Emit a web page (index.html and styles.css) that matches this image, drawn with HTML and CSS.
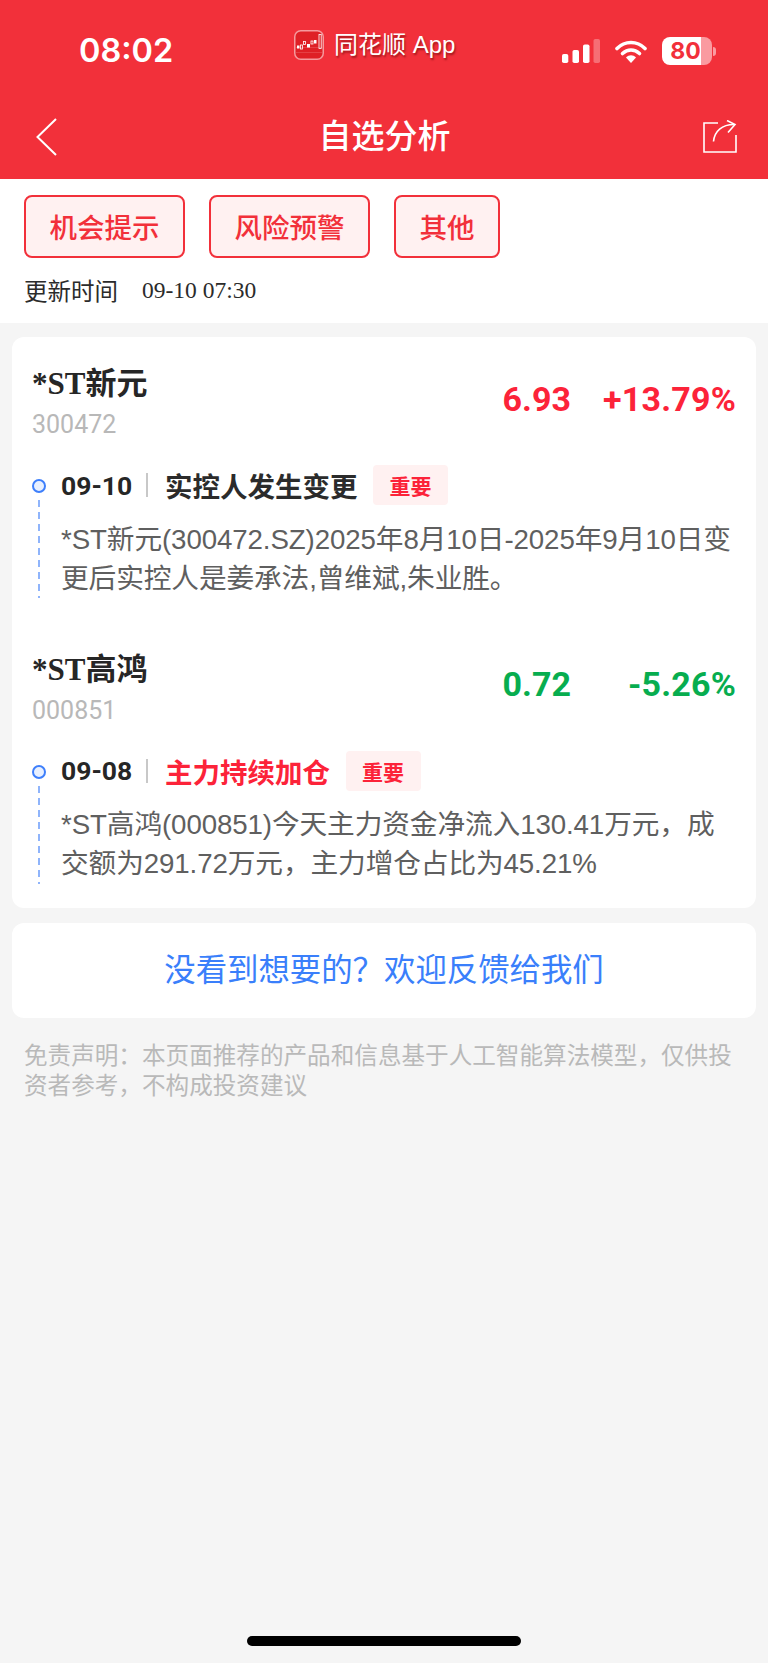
FILE: index.html
```html
<!DOCTYPE html>
<html lang="zh">
<head>
<meta charset="utf-8">
<title>自选分析</title>
<link rel="stylesheet" href="styles.css">
</head>
<body>
<div class="page">
  <header class="header">
    <div class="status">
      <span class="clock">08:02</span>
      <div class="app-label">
        <svg class="app-logo" viewBox="0 0 30 30">
          <rect x="0.75" y="0.75" width="28.5" height="28.5" rx="6" fill="#df2026" stroke="#f59a9d" stroke-width="1.5"/>
          <path d="M2 17.500h26M2 22.500h26" stroke="#e9565a" stroke-width="0.6"/>
          <g fill="#fff">
            <rect x="3" y="15.500" width="2.500" height="3"/><rect x="13" y="14" width="3" height="3.500"/>
            <rect x="20" y="10" width="2.500" height="3.500"/>
          </g>
          <g fill="none" stroke="#fff" stroke-width="0.8">
            <rect x="6.500" y="15" width="2" height="4"/><rect x="9.500" y="11.500" width="2" height="3"/>
            <rect x="17" y="11" width="2" height="3"/><rect x="25" y="4.500" width="2.200" height="14"/>
          </g>
        </svg>
        <span class="app-name">同花顺 App</span>
      </div>
      <div class="status-icons">
        <svg class="signal" viewBox="0 0 38 24">
          <rect x="0" y="15" width="6.300" height="9" rx="1.800" fill="#fff"/>
          <rect x="10.500" y="11" width="6.500" height="13" rx="1.800" fill="#fff"/>
          <rect x="21" y="5.500" width="6.500" height="18.500" rx="1.800" fill="#fff"/>
          <rect x="31.500" y="0" width="6.500" height="24" rx="1.800" fill="#fff" fill-opacity="0.3"/>
        </svg>
        <svg class="wifi" viewBox="0 0 32 24">
          <path d="M2 9.500C10 1.500 22 1.500 30 9.500" fill="none" stroke="#fff" stroke-width="3.600" stroke-linecap="round"/>
          <path d="M7.500 14.500C12.500 9.800 19.500 9.800 24.500 14.500" fill="none" stroke="#fff" stroke-width="3.600" stroke-linecap="round"/>
          <path d="M11 18.500C14 15.500 18 15.500 21 18.500L16 24Z" fill="#fff"/>
        </svg>
        <div class="battery">
          <div class="battery-body"><span class="battery-num">80</span></div>
          <span class="battery-cap"></span>
        </div>
      </div>
    </div>
    <nav class="navbar">
      <svg class="nav-back" viewBox="0 0 21 38">
        <path d="M20 1L1.500 19L20 37" fill="none" stroke="#fff" stroke-width="2"/>
      </svg>
      <h1 class="nav-title">自选分析</h1>
      <svg class="nav-share" viewBox="0 0 34 33">
        <path d="M15 3H1v29h32V15" fill="none" stroke="#fff" stroke-width="1.600"/>
        <path d="M10.500 21.500C11.500 11 19 4.500 31 4.500" fill="none" stroke="#fff" stroke-width="1.600"/>
        <path d="M24 0.500L32 4.500L25 12.500" fill="none" stroke="#fff" stroke-width="1.600"/>
      </svg>
    </nav>
  </header>

  <section class="filters">
    <div class="tabs">
      <button class="tab">机会提示</button>
      <button class="tab">风险预警</button>
      <button class="tab">其他</button>
    </div>
    <p class="updated"><span class="updated-label">更新时间</span><span class="updated-time">09-10 07:30</span></p>
  </section>

  <main class="content">
    <section class="card stocks">
      <article class="stock">
        <div class="stock-head">
          <div class="stock-id">
            <div class="stock-name">*ST新元</div>
            <div class="stock-code">300472</div>
          </div>
          <div class="stock-quote up">
            <span class="price">6.93</span>
            <span class="change">+13.79%</span>
          </div>
        </div>
        <div class="event">
          <div class="event-head">
            <span class="date">09-10</span>
            <span class="divider"></span>
            <span class="event-title">实控人发生变更</span>
            <span class="tag">重要</span>
          </div>
          <p class="event-text">*ST新元(300472.SZ)2025年8月10日-2025年9月10日变更后实控人是姜承法,曾维斌,朱业胜。</p>
        </div>
      </article>
      <article class="stock">
        <div class="stock-head">
          <div class="stock-id">
            <div class="stock-name">*ST高鸿</div>
            <div class="stock-code">000851</div>
          </div>
          <div class="stock-quote down">
            <span class="price">0.72</span>
            <span class="change">-5.26%</span>
          </div>
        </div>
        <div class="event">
          <div class="event-head">
            <span class="date">09-08</span>
            <span class="divider"></span>
            <span class="event-title hot">主力持续加仓</span>
            <span class="tag">重要</span>
          </div>
          <p class="event-text">*ST高鸿(000851)今天主力资金净流入130.41万元，成交额为291.72万元，主力增仓占比为45.21%</p>
        </div>
      </article>
    </section>
    <a class="card feedback">没看到想要的？欢迎反馈给我们</a>
    <p class="disclaimer">免责声明：本页面推荐的产品和信息基于人工智能算法模型，仅供投资者参考，不构成投资建议</p>
  </main>

  <div class="home-bar"></div>
</div>
</body>
</html>
```

FILE: styles.css
```css
* { box-sizing: border-box; margin: 0; padding: 0; }
html, body { background: #f5f5f5; }
body { font-family: "Liberation Sans", "Noto Sans CJK SC", sans-serif; }

.page { width: 768px; height: 1663px; display: flex; flex-direction: column; overflow: hidden; }

.header { background: #f2303a; height: 179px; color: #fff; }
.status { height: 94px; display: flex; align-items: center; padding: 8px 0 0 79px; }
.clock { font-family: Inter, sans-serif; font-weight: 600; font-size: 32.500px; line-height: 40px; width: 215px; }
.app-label { display: flex; align-items: center; gap: 10px; margin-top: -12px; }
.app-logo { width: 30px; height: 30px; }
.app-name { font-size: 24px; line-height: 30px; text-shadow: 1px 2px 2px rgba(90, 0, 0, .55); }
.status-icons { display: flex; align-items: center; margin-left: auto; padding-right: 52px; }
.signal { width: 38px; height: 24px; }
.wifi { width: 32px; height: 24px; margin-left: 15px; }
.battery { display: flex; align-items: center; margin-left: 15px; }
.battery-body { width: 50px; height: 28px; padding-right: 3px; border-radius: 8px; background: linear-gradient(90deg, #fff 78%, #fa9aa0 78%); display: flex; align-items: center; justify-content: center; }
.battery-num { font-family: Inter, sans-serif; font-weight: 700; font-size: 23px; line-height: 28px; color: #f2303a; }
.battery-cap { width: 3px; height: 9px; margin-left: 1px; border-radius: 0 3px 3px 0; background: #fa9aa0; }

.navbar { height: 85px; display: grid; grid-template-columns: 1fr auto 1fr; align-items: center; padding: 0 31px 0 32px; }
.nav-back { width: 21px; height: 38px; margin-left: 4px; }
.nav-title { font-size: 33px; font-weight: 500; line-height: 44px; }
.nav-share { width: 34px; height: 33px; justify-self: end; }

.filters { background: #fff; height: 144px; padding: 16px 24px 0; }
.tabs { display: flex; gap: 24px; }
.tab { height: 63px; padding: 0 23.500px; border: 2px solid #f2303a; border-radius: 8px; background: #fff1f1; color: #f2303a; font: 500 27.500px/1 "Noto Sans CJK SC", sans-serif; }
.updated { display: flex; align-items: center; margin-top: 17px; height: 30px; color: #2b2b2b; }
.updated-label { font-size: 23.500px; }
.updated-time { font-family: "Liberation Serif", serif; font-size: 23.500px; margin-left: 24px; }

.content { padding: 14px 12px 0; display: flex; flex-direction: column; }
.card { background: #fff; border-radius: 12px; }
.stocks { padding: 0 20px; height: 571px; }
.stock { height: 285.500px; padding-top: 27px; }
.stock-head { display: flex; justify-content: space-between; align-items: center; }
.stock-name { font-family: "Liberation Serif", "Noto Sans CJK SC", serif; font-weight: 700; font-size: 31px; line-height: 40px; color: #262626; }
.stock-code { font-family: Roboto, sans-serif; font-size: 25px; line-height: 32px; color: #b8b8b8; margin-top: 5px; }
.stock-quote { display: flex; font-family: Roboto, sans-serif; font-weight: 700; font-size: 34px; line-height: 40px; margin-top: -8px; }
.up { color: #fc2339; }
.down { color: #07ad4f; }
.change { width: 165px; text-align: right; letter-spacing: 0.200px; }

.event { position: relative; margin-top: 24px; padding-left: 29px; }
.event::before { content: ""; box-sizing: border-box; position: absolute; left: 0; top: 14px; width: 14px; height: 14px; border: 2.500px solid #3e7ffb; border-radius: 50%; background: #e8f0ff; }
.event::after { content: ""; position: absolute; left: 5.500px; top: 35px; width: 2px; height: 98px; background: repeating-linear-gradient(180deg, #8fb4fb 0 7px, transparent 7px 12px); }
.event-head { display: flex; align-items: center; height: 40px; }
.date { font-family: Roboto, sans-serif; font-weight: 700; font-size: 26.500px; color: #262626; width: 71px; white-space: nowrap; }
.divider { width: 2px; height: 24px; background: #c8c8c8; margin: 0 17px 0 14px; }
.event-title { font-family: "Noto Sans CJK SC", sans-serif; font-weight: 700; font-size: 27.500px; color: #2b2b2b; }
.event-title.hot { color: #fc2339; }
.tag { margin-left: 15.500px; width: 75px; height: 40px; border-radius: 4px; background: #fff1f1; color: #fc2339; font-family: "Noto Sans CJK SC", sans-serif; font-weight: 700; font-size: 21px; display: flex; align-items: center; justify-content: center; }
.event-text { margin-top: 14.500px; font-size: 27.700px; letter-spacing: -0.110px; line-height: 39px; color: #5f5f5f; }

.feedback { margin-top: 15px; height: 95px; padding-bottom: 6px; display: flex; align-items: center; justify-content: center; font-family: "Noto Sans CJK SC", sans-serif; font-size: 31.400px; color: #3a7ffb; }
.disclaimer { margin: 23px 12px 0; font-size: 23.600px; line-height: 30px; color: #b9b9b9; }

.home-bar { width: 274px; height: 10px; border-radius: 5px; background: #000; margin: auto auto 17px; }
```
